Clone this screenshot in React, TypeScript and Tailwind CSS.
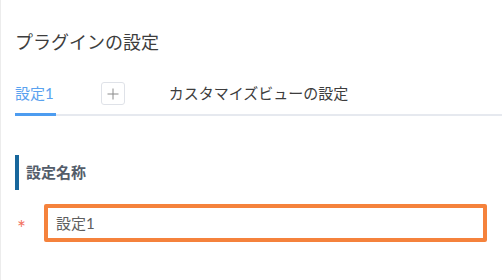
export default function App() {
  return (
    <div className="w-[502px] h-[280px] bg-white border-l border-[#ececec] pl-[14px] font-[Lato,'Noto_Sans_CJK_JP',sans-serif] overflow-hidden">
      <h1 className="pt-[29px] text-[18px] leading-[26px] text-[#3d3d3d] font-normal">プラグインの設定</h1>

      <div className="mt-[27px] flex items-start border-b-2 border-[#e6e9ef]">
        <div className="-mb-[2px] pb-[9px] border-b-[3px] border-[#4d9cf0] pr-[2px]">
          <span className="block text-[15px] leading-[22px] text-[#5aa2ef]">設定1</span>
        </div>
        <button className="ml-[45px] w-[24px] h-[23px] flex items-center justify-center border border-[#dfe2e8] rounded-[3px] bg-white">
          <svg width="12" height="12" viewBox="0 0 12 12" fill="none" stroke="#8a8a8a" strokeWidth="1">
            <path d="M6 0.5V11.5M0.5 6H11.5" />
          </svg>
        </button>
        <span className="ml-[44px] text-[15px] leading-[22px] text-[#3d3d3d]">カスタマイズビューの設定</span>
      </div>

      <div className="mt-[39px] h-[35px] flex items-center border-l-4 border-[#18679c] pl-[7px]">
        <span className="text-[15px] font-bold text-[#545d6a]">設定名称</span>
      </div>

      <div className="mt-[14px] flex items-center">
        <span className="w-[29px] pl-[2px] text-[21px] leading-[20px] text-[#f2735f] mt-[10px]">*</span>
        <div className="w-[443px] h-[38px] border-4 border-[#f5823c] rounded-[2px] flex items-center pl-[8px]">
          <span className="text-[15px] text-[#5e5e5e]">設定1</span>
        </div>
      </div>
    </div>
  );
}
